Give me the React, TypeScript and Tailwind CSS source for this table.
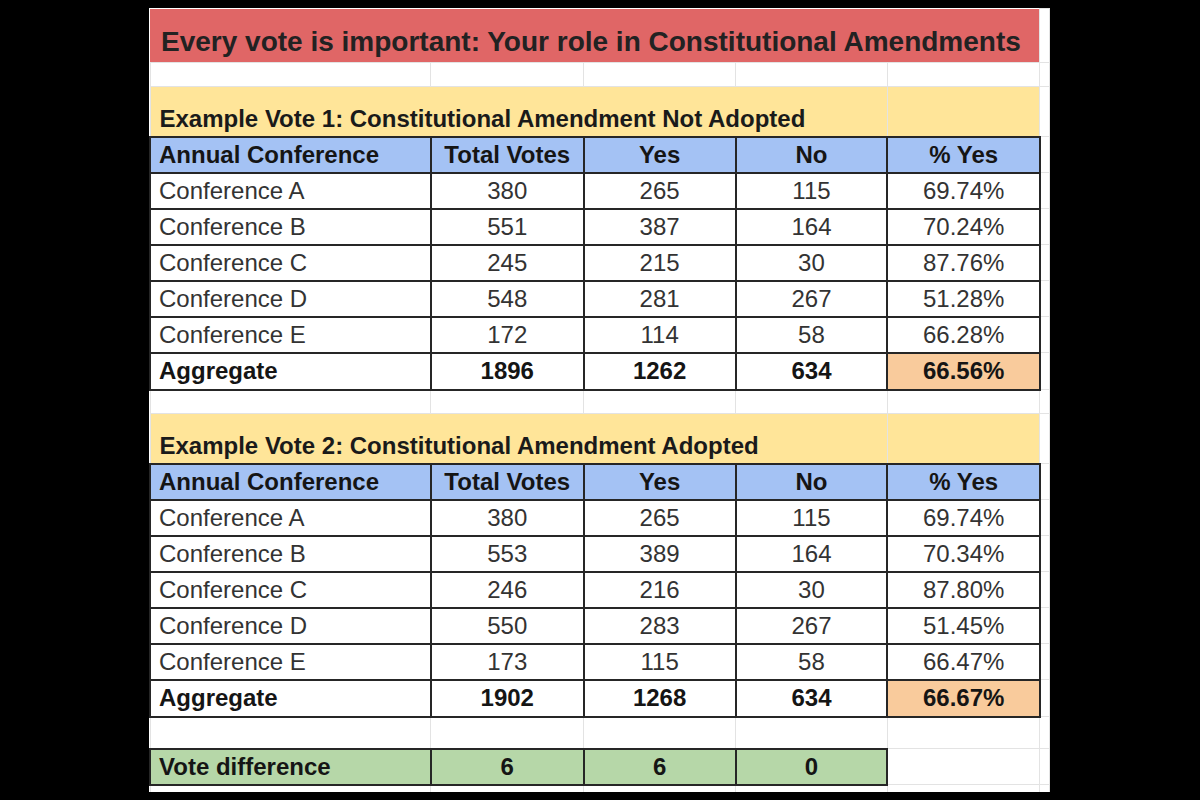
import React from "react";

type Row = [string, string, string, string, string];

const vote1: Row[] = [
  ["Conference A", "380", "265", "115", "69.74%"],
  ["Conference B", "551", "387", "164", "70.24%"],
  ["Conference C", "245", "215", "30", "87.76%"],
  ["Conference D", "548", "281", "267", "51.28%"],
  ["Conference E", "172", "114", "58", "66.28%"],
];
const agg1: Row = ["Aggregate", "1896", "1262", "634", "66.56%"];

const vote2: Row[] = [
  ["Conference A", "380", "265", "115", "69.74%"],
  ["Conference B", "553", "389", "164", "70.34%"],
  ["Conference C", "246", "216", "30", "87.80%"],
  ["Conference D", "550", "283", "267", "51.45%"],
  ["Conference E", "173", "115", "58", "66.47%"],
];
const agg2: Row = ["Aggregate", "1902", "1268", "634", "66.67%"];

const light = "border border-[#e3e3e3]";
const dark = "border-2 border-[#262626]";

function Blank({ h }: { h: string }) {
  return (
    <tr className={h}>
      <td className={light}></td>
      <td className={light}></td>
      <td className={light}></td>
      <td className={light}></td>
      <td className={light}></td>
      <td className={light}></td>
    </tr>
  );
}

function Section({ title, rows, agg }: { title: string; rows: Row[]; agg: Row }) {
  return (
    <>
      <tr className="h-[50px]">
        <td colSpan={4} className={`${light} bg-[#ffe599] align-bottom pl-[9px] pb-[3px] font-bold text-[24px] leading-[28px] text-[#1a1a1a] whitespace-nowrap`}>
          {title}
        </td>
        <td className={`${light} bg-[#ffe599]`}></td>
        <td className={light}></td>
      </tr>
      <tr className="h-[36px] font-bold text-[#151515]">
        <td className={`${dark} bg-[#a4c2f4] pl-[8px]`}>Annual Conference</td>
        <td className={`${dark} bg-[#a4c2f4] text-center`}>Total Votes</td>
        <td className={`${dark} bg-[#a4c2f4] text-center`}>Yes</td>
        <td className={`${dark} bg-[#a4c2f4] text-center`}>No</td>
        <td className={`${dark} bg-[#a4c2f4] text-center`}>% Yes</td>
        <td className={light}></td>
      </tr>
      {rows.map((r) => (
        <tr key={r[0]} className="h-[36px] text-[#333333]">
          <td className={`${dark} pl-[8px]`}>{r[0]}</td>
          <td className={`${dark} text-center`}>{r[1]}</td>
          <td className={`${dark} text-center`}>{r[2]}</td>
          <td className={`${dark} text-center`}>{r[3]}</td>
          <td className={`${dark} text-center`}>{r[4]}</td>
          <td className={light}></td>
        </tr>
      ))}
      <tr className="h-[37px] font-bold text-[#151515]">
        <td className={`${dark} pl-[8px]`}>{agg[0]}</td>
        <td className={`${dark} text-center`}>{agg[1]}</td>
        <td className={`${dark} text-center`}>{agg[2]}</td>
        <td className={`${dark} text-center`}>{agg[3]}</td>
        <td className={`${dark} bg-[#f9cb9c] text-center`}>{agg[4]}</td>
        <td className={light}></td>
      </tr>
    </>
  );
}

export default function App() {
  return (
    <div
      className="w-[1200px] h-[800px] bg-black pl-[149px] pt-[8px]"
      style={{ fontFamily: '"Liberation Sans", Arial, sans-serif' }}
    >
      <div className="w-[901px] h-[784px] bg-white overflow-hidden">
        <table className="border-collapse table-fixed text-[24px] leading-[28px]">
          <colgroup>
            <col className="w-[281px]" />
            <col className="w-[153px]" />
            <col className="w-[152px]" />
            <col className="w-[152px]" />
            <col className="w-[153px]" />
            <col className="w-[10px]" />
          </colgroup>
          <tbody>
            <tr className="h-[54px]">
              <td colSpan={5} className="bg-[#e06666] align-bottom pl-[11px] pb-[4px] font-bold text-[28px] leading-[32px] text-[#222222] whitespace-nowrap">
                Every vote is important: Your role in Constitutional Amendments
              </td>
              <td className={light}></td>
            </tr>
            <Blank h="h-[24px]" />
            <Section title="Example Vote 1: Constitutional Amendment Not Adopted" rows={vote1} agg={agg1} />
            <Blank h="h-[24px]" />
            <Section title="Example Vote 2: Constitutional Amendment Adopted" rows={vote2} agg={agg2} />
            <Blank h="h-[32px]" />
            <tr className="h-[36px] font-bold text-[#151515]">
              <td className={`${dark} bg-[#b6d7a8] pl-[8px]`}>Vote difference</td>
              <td className={`${dark} bg-[#b6d7a8] text-center`}>6</td>
              <td className={`${dark} bg-[#b6d7a8] text-center`}>6</td>
              <td className={`${dark} bg-[#b6d7a8] text-center`}>0</td>
              <td className={light}></td>
              <td className={light}></td>
            </tr>
            <Blank h="h-[10px]" />
          </tbody>
        </table>
      </div>
    </div>
  );
}
